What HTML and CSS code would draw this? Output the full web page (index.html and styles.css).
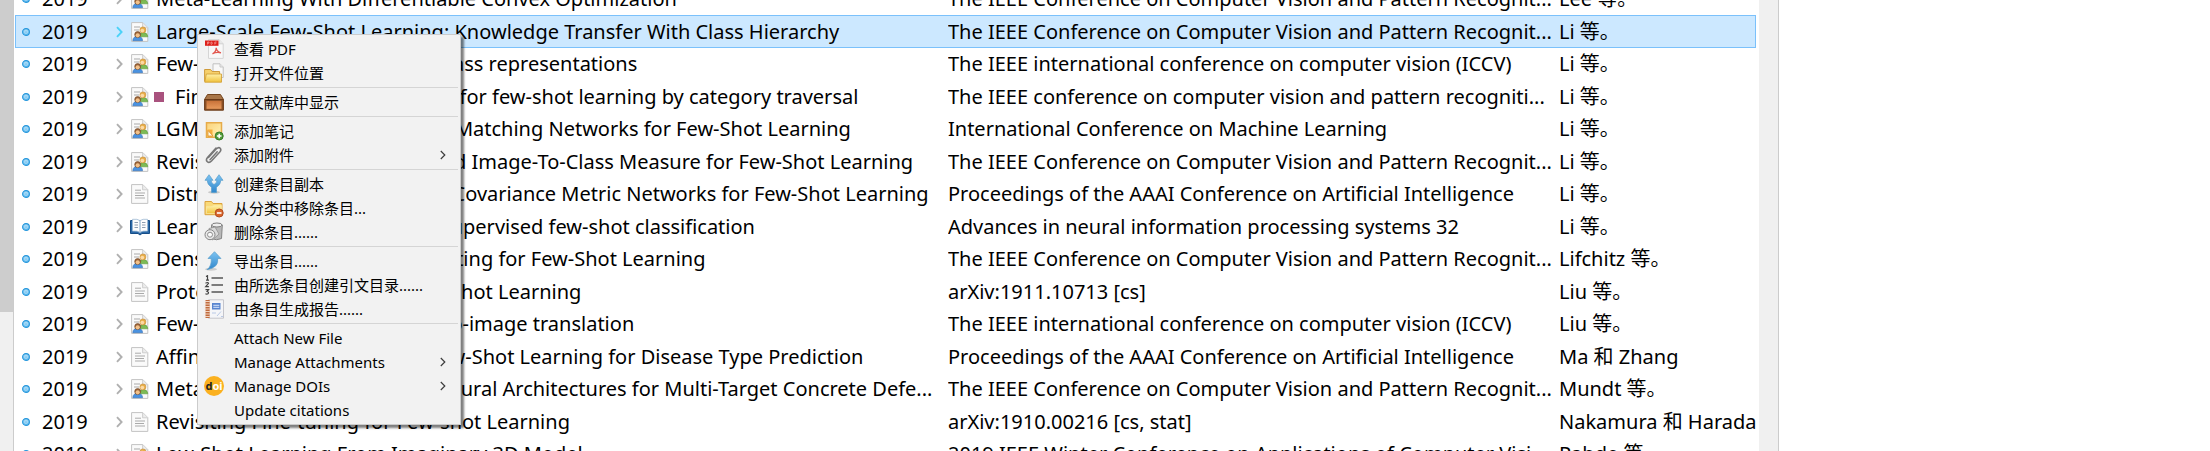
FILE: index.html
```
<!DOCTYPE html>
<html lang="zh-CN">
<head>
<meta charset="utf-8">
<title>Zotero</title>
<link rel="stylesheet" href="styles.css">
</head>
<body>
<svg class="sprites" aria-hidden="true">
  <defs>
    <linearGradient id="g-dot" x1="0" y1="0" x2="0" y2="1"><stop offset="0" stop-color="#a5d8f5"/><stop offset="1" stop-color="#5db9ee"/></linearGradient>
    <linearGradient id="g-blue" x1="0" y1="0" x2="0" y2="1"><stop offset="0" stop-color="#7cc3f2"/><stop offset="1" stop-color="#2f86cb"/></linearGradient>
    <linearGradient id="g-box" x1="0" y1="0" x2="0" y2="1"><stop offset="0" stop-color="#c9733a"/><stop offset="1" stop-color="#e79a5c"/></linearGradient>
    <linearGradient id="g-folder" x1="0" y1="0" x2="0" y2="1"><stop offset="0" stop-color="#fff0a8"/><stop offset="1" stop-color="#f0c23c"/></linearGradient>
    <linearGradient id="g-note" x1="0" y1="0" x2="1" y2="1"><stop offset="0" stop-color="#fbd27a"/><stop offset="1" stop-color="#fff3b8"/></linearGradient>
    <symbol id="dot" viewBox="0 0 8 8"><circle cx="4" cy="4" r="3.4" fill="url(#g-dot)" stroke="#2496dc" stroke-width="1.1"/><circle cx="4" cy="4" r="1.5" fill="none" stroke="#c6e8fa" stroke-width=".5"/></symbol>
    <symbol id="chev" viewBox="0 0 7 12"><path d="M1 1.2 5.6 6 1 10.8" fill="none" stroke="currentColor" stroke-width="1.9"/></symbol>
    <symbol id="sub" viewBox="0 0 6 10"><path d="M.8 1 4.8 5 .8 9" fill="none" stroke="#3c3c3c" stroke-width="1.2"/></symbol>
    <symbol id="page" viewBox="0 0 20 20"><path d="M1.6.6h11.2l5 5v13.8H1.6z" fill="#fafafa" stroke="#c3c3c3"/><path d="M12.6.8v5h5" fill="#ececec" stroke="#c9c9c9" stroke-width=".9"/><path d="M5 6.2h6M5 9h10M5 11.5h9M5 14h10" stroke="#aaa"/></symbol>
    <symbol id="conf" viewBox="0 0 20 20"><path d="M1.6.6h11.2l5 5v13.8H1.6z" fill="#fafafa" stroke="#c3c3c3"/><path d="M12.6.8v5h5" fill="#ececec" stroke="#c9c9c9" stroke-width=".9"/><path d="M4 5h6M4 8h5" stroke="#a9a9a9"/><path d="M9 14q1-3.4 4.500-3.400T17.700 14v.8H9z" fill="#7dbb55" stroke="#5c9a3a" stroke-width=".6"/><circle cx="12.900" cy="7.900" r="3" fill="#e9ae48" stroke="#c58a34" stroke-width=".6"/><circle cx="12.300" cy="8.600" r="1.900" fill="#fbd9a4"/><path d="M2.800 18.700q0-4.300 4.800-4.300t5 4.300z" fill="#4a92e0" stroke="#336fb5" stroke-width=".6"/><circle cx="7.700" cy="12.500" r="3" fill="#986238" stroke="#784a24" stroke-width=".6"/><circle cx="7.700" cy="13.300" r="2.100" fill="#f3c188"/></symbol>
    <symbol id="book" viewBox="0 0 20 20"><path d="M.5 3.500h19v13h-7.500L10 18l-2-1.500H.5z" fill="#2b69a8" stroke="#174d86"/><path d="M2.500 2.300q5-.6 7.500 1.300v11.800q-2.500-1.900-7.500-1.300zM17.500 2.300q-5-.6-7.500 1.300v11.800q2.500-1.900 7.500-1.300z" fill="#fdfdfd" stroke="#9db9d3" stroke-width=".8"/><path d="M4.500 5.500H8M4.500 8H8M4.500 10.500H8M12 5.500h3.500M12 8h3.500M12 10.500h3.500" stroke="#8e9db0"/></symbol>
    <symbol id="pdf" viewBox="0 0 20 20"><path d="M4.500.6h10.500l4.200 4.200v14.600H4.500z" fill="#f8f8f8" stroke="#d5d5d5"/><path d="M15 .6v4.200h4.200" fill="#e7e7e7" stroke="#ccc" stroke-width=".8"/><path d="M1 1.500h13.500v5.300H1z" fill="#dd1f1a"/><path d="M3.500 5.500v-2.500h1.500v1.200H3.800M7 3v2.300h.8q1.200-1.100 0-2.200zM10.800 5.500V3h1.800M10.800 4.200h1.500" fill="none" stroke="#f5a5a0" stroke-width=".7"/><path d="M8.500 14.800q3.700-1.700 3.700-6 .3 4 4.800 5-4.500-1.200-8.500 1z" fill="none" stroke="#e2574f" stroke-width="1.300"/></symbol>
    <symbol id="locate" viewBox="0 0 20 20"><path d="M9 .8h7l3.200 3.200v10.500H9z" fill="#f8f8f8" stroke="#c0c0c0"/><path d="M16 .8V4h3.200" fill="#e8e8e8" stroke="#c8c8c8"/><path d="M.6 18.500V6.500h6l1.500 2h7.500v3" fill="#f6d06c" stroke="#cf9b3b"/><path d="M.8 19.200 2.300 11h15.200v8.200z" fill="url(#g-folder)" stroke="#d4a33b" stroke-width=".9"/></symbol>
    <symbol id="library" viewBox="0 0 20 20"><path d="M3.500 2.500h13l3 5H.5z" fill="#a87649" stroke="#74451f"/><path d="M.6 7.500h18.800v10.700H.6z" fill="#8d5227" stroke="#6b3a18"/><path d="M2.500 9h15v7.800h-15z" fill="url(#g-box)"/></symbol>
    <symbol id="note" viewBox="0 0 20 20"><path d="M2.500 1.800h15v14.400h-15z" fill="url(#g-note)" stroke="#e6ab4a" stroke-width="1.500"/><path d="M3.500 8.500h5v7.300h-5z" fill="#f6ae3b"/><path d="m4 9.500 5 5.500H4z" fill="#fffbe0" stroke="#dd902d" stroke-width=".8"/><circle cx="15.200" cy="15" r="4" fill="#549c3b" stroke="#377c28"/><path d="M12.900 15h4.600M15.200 12.700v4.600" stroke="#fff" stroke-width="1.500"/></symbol>
    <symbol id="clip" viewBox="0 0 20 20"><path d="M4.500 12.500 12.200 4q2.500-2.300 4-.8t-.4 3.800L7.500 16q-2.300 2.300-4.200.7t.2-4.200L12 3M6 14.700l7.200-8" fill="none" stroke="#777" stroke-width="1.500" stroke-linecap="round"/></symbol>
    <symbol id="split" viewBox="0 0 20 20"><ellipse cx="10" cy="18.300" rx="6" ry="1.500" fill="#c9c9c9"/><path d="M5 .7 9 6.300H7q0 2.400 3 4.300 3-1.900 3-4.300h-2L15 .7l4 5.600h-2.200q0 4.300-4.300 7V18.500h-5v-5.200q-4.300-2.700-4.300-7H1z" fill="url(#g-blue)" stroke="#579ecb" stroke-width=".7"/></symbol>
    <symbol id="remove" viewBox="0 0 20 20"><path d="M1 16.700V3.500h6.500l1.500 2h9v11.200z" fill="#f9d978" stroke="#dca33d"/><path d="M2.500 8.500q5 1 7.500-1h7.500v8h-15z" fill="url(#g-folder)" stroke="#f9e9a8" stroke-width=".6"/><circle cx="15.200" cy="15" r="4" fill="#d9662c" stroke="#b34b1c"/><path d="M12.900 15h4.600" stroke="#fff" stroke-width="1.600"/></symbol>
    <symbol id="trash" viewBox="0 0 20 20"><path d="M7.500 3v13.500q5 2.500 10 0L18.300 3z" fill="#b9b9b9" stroke="#858585"/><ellipse cx="12.900" cy="3" rx="5.200" ry="2" fill="#ededed" stroke="#7c7c7c"/><path d="M5 6.500 11 5l4 7-6.500 6z" fill="#dadada" stroke="#8e8e8e" stroke-width=".8"/><circle cx="6" cy="12.700" r="5" fill="#e9e9e9" stroke="#858585"/><circle cx="6" cy="12.700" r="2.500" fill="#fafafa" stroke="#8e8e8e"/></symbol>
    <symbol id="export" viewBox="0 0 20 20"><ellipse cx="7" cy="18.300" rx="6" ry="1.500" fill="#cdcdcd"/><path d="M10.500.7 17 7.500h-3.300q1.300 9-10.700 11.200 5-4 4.200-11.200H4z" fill="url(#g-blue)" stroke="#579ecb" stroke-width=".7"/></symbol>
    <symbol id="biblio" viewBox="0 0 20 20"><path d="M7.500 3H19M7.500 10H19M7.500 17H19" stroke="#555" stroke-width="1.300"/><path d="M2 1.500 3.500.7v4.500M2 5.200h3M1.500 8.200q2.500-1.500 3 .2L1.700 11.600h3.200M1.500 14.700h3L3 16.500q2.300.5 1 2.200-1.200.7-2.600 0" fill="none" stroke="#444" stroke-width="1.200"/></symbol>
    <symbol id="report" viewBox="0 0 20 20"><path d="M4.500.8h15v18.400h-15z" fill="#f4f5f8" stroke="#c5c5cb"/><path d="M1.500 1h4.200v18H1.500z" fill="#c06b3e"/><path d="M.8 2.500h5M.8 5h5M.8 7.500h5M.8 10h5M.8 12.500h5M.8 15h5M.8 17.500h5" stroke="#f7dfce" stroke-width=".9"/><path d="M8 4h8.500v6.500H8z" fill="#5885d0"/><path d="M9.300 6.300h6M9.300 8.300h6" stroke="#d9e5fb"/><path d="M8 14h4M13 17l4-4.500M17 17.500h2" stroke="#b9c9e6"/></symbol>
    <symbol id="doi" viewBox="0 0 20 20"><circle cx="10" cy="10" r="10" fill="#fbb120"/><text x="10" y="14" text-anchor="middle" class="doi-text">d<tspan fill="#fff">oi</tspan></text></symbol>
  </defs>
</svg>
<main class="app">
  <div class="gutter"><div class="thumb"></div></div>
  <section class="list">
    <table class="items">
      <colgroup><col class="c-dot"><col class="c-year"><col class="c-title"><col class="c-pub"><col class="c-creator"></colgroup>
      <tbody>
        <tr><td><svg class="dot"><use href="#dot"/></svg></td><td>2019</td><td><div class="cell"><svg class="chev"><use href="#chev"/></svg><svg class="kind"><use href="#conf"/></svg><span>Meta-Learning With Differentiable Convex Optimization</span></div></td><td>The IEEE Conference on Computer Vision and Pattern Recognit...</td><td>Lee 等。</td></tr>
        <tr class="selected"><td><svg class="dot"><use href="#dot"/></svg></td><td>2019</td><td><div class="cell"><svg class="chev"><use href="#chev"/></svg><svg class="kind"><use href="#conf"/></svg><span>Large-Scale Few-Shot Learning: Knowledge Transfer With Class Hierarchy</span></div></td><td>The IEEE Conference on Computer Vision and Pattern Recognit...</td><td>Li 等。</td></tr>
        <tr><td><svg class="dot"><use href="#dot"/></svg></td><td>2019</td><td><div class="cell"><svg class="chev"><use href="#chev"/></svg><svg class="kind"><use href="#conf"/></svg><span>Few-shot learning with global class representations</span></div></td><td>The IEEE international conference on computer vision (ICCV)</td><td>Li 等。</td></tr>
        <tr><td><svg class="dot"><use href="#dot"/></svg></td><td>2019</td><td><div class="cell"><svg class="chev"><use href="#chev"/></svg><svg class="kind"><use href="#conf"/></svg><i class="tag"></i><span>Finding task-relevant features for few-shot learning by category traversal</span></div></td><td>The IEEE conference on computer vision and pattern recogniti...</td><td>Li 等。</td></tr>
        <tr><td><svg class="dot"><use href="#dot"/></svg></td><td>2019</td><td><div class="cell"><svg class="chev"><use href="#chev"/></svg><svg class="kind"><use href="#conf"/></svg><span>LGM-Net: Learning to Generate Matching Networks for Few-Shot Learning</span></div></td><td>International Conference on Machine Learning</td><td>Li 等。</td></tr>
        <tr><td><svg class="dot"><use href="#dot"/></svg></td><td>2019</td><td><div class="cell"><svg class="chev"><use href="#chev"/></svg><svg class="kind"><use href="#conf"/></svg><span>Revisiting Local Descriptor Based Image-To-Class Measure for Few-Shot Learning</span></div></td><td>The IEEE Conference on Computer Vision and Pattern Recognit...</td><td>Li 等。</td></tr>
        <tr><td><svg class="dot"><use href="#dot"/></svg></td><td>2019</td><td><div class="cell"><svg class="chev"><use href="#chev"/></svg><svg class="kind"><use href="#page"/></svg><span>Distribution Consistency Based Covariance Metric Networks for Few-Shot Learning</span></div></td><td>Proceedings of the AAAI Conference on Artificial Intelligence</td><td>Li 等。</td></tr>
        <tr><td><svg class="dot"><use href="#dot"/></svg></td><td>2019</td><td><div class="cell"><svg class="chev"><use href="#chev"/></svg><svg class="kind"><use href="#book"/></svg><span>Learning to self-train for semi-supervised few-shot classification</span></div></td><td>Advances in neural information processing systems 32</td><td>Li 等。</td></tr>
        <tr><td><svg class="dot"><use href="#dot"/></svg></td><td>2019</td><td><div class="cell"><svg class="chev"><use href="#chev"/></svg><svg class="kind"><use href="#conf"/></svg><span>Dense Classification and Implanting for Few-Shot Learning</span></div></td><td>The IEEE Conference on Computer Vision and Pattern Recognit...</td><td>Lifchitz 等。</td></tr>
        <tr><td><svg class="dot"><use href="#dot"/></svg></td><td>2019</td><td><div class="cell"><svg class="chev"><use href="#chev"/></svg><svg class="kind"><use href="#page"/></svg><span>Prototype Rectification for Few-Shot Learning</span></div></td><td>arXiv:1911.10713 [cs]</td><td>Liu 等。</td></tr>
        <tr><td><svg class="dot"><use href="#dot"/></svg></td><td>2019</td><td><div class="cell"><svg class="chev"><use href="#chev"/></svg><svg class="kind"><use href="#conf"/></svg><span>Few-shot unsupervised image-to-image translation</span></div></td><td>The IEEE international conference on computer vision (ICCV)</td><td>Liu 等。</td></tr>
        <tr><td><svg class="dot"><use href="#dot"/></svg></td><td>2019</td><td><div class="cell"><svg class="chev"><use href="#chev"/></svg><svg class="kind"><use href="#page"/></svg><span>AffinityNet: Semi-Supervised Few-Shot Learning for Disease Type Prediction</span></div></td><td>Proceedings of the AAAI Conference on Artificial Intelligence</td><td>Ma 和 Zhang</td></tr>
        <tr><td><svg class="dot"><use href="#dot"/></svg></td><td>2019</td><td><div class="cell"><svg class="chev"><use href="#chev"/></svg><svg class="kind"><use href="#conf"/></svg><span>Meta-Learning Convolutional Neural Architectures for Multi-Target Concrete Defe...</span></div></td><td>The IEEE Conference on Computer Vision and Pattern Recognit...</td><td>Mundt 等。</td></tr>
        <tr><td><svg class="dot"><use href="#dot"/></svg></td><td>2019</td><td><div class="cell"><svg class="chev"><use href="#chev"/></svg><svg class="kind"><use href="#page"/></svg><span>Revisiting Fine-tuning for Few-shot Learning</span></div></td><td>arXiv:1910.00216 [cs, stat]</td><td>Nakamura 和 Harada</td></tr>
        <tr><td><svg class="dot"><use href="#dot"/></svg></td><td>2019</td><td><div class="cell"><svg class="chev"><use href="#chev"/></svg><svg class="kind"><use href="#conf"/></svg><span>Low-Shot Learning From Imaginary 3D Model</span></div></td><td>2019 IEEE Winter Conference on Applications of Computer Visi...</td><td>Pahde 等。</td></tr>
      </tbody>
    </table>
  </section>
  <div class="splitter"></div>
  <aside class="details"></aside>
</main>
<div class="menu" role="menu">
  <button role="menuitem"><svg><use href="#pdf"/></svg><span>查看 PDF</span></button>
  <button role="menuitem"><svg><use href="#locate"/></svg><span>打开文件位置</span></button>
  <hr>
  <button role="menuitem"><svg><use href="#library"/></svg><span>在文献库中显示</span></button>
  <hr>
  <button role="menuitem"><svg><use href="#note"/></svg><span>添加笔记</span></button>
  <button role="menuitem"><svg><use href="#clip"/></svg><span>添加附件</span><svg class="sub"><use href="#sub"/></svg></button>
  <hr>
  <button role="menuitem"><svg><use href="#split"/></svg><span>创建条目副本</span></button>
  <button role="menuitem"><svg><use href="#remove"/></svg><span>从分类中移除条目...</span></button>
  <button role="menuitem"><svg><use href="#trash"/></svg><span>删除条目......</span></button>
  <hr>
  <button role="menuitem"><svg><use href="#export"/></svg><span>导出条目......</span></button>
  <button role="menuitem"><svg><use href="#biblio"/></svg><span>由所选条目创建引文目录......</span></button>
  <button role="menuitem"><svg><use href="#report"/></svg><span>由条目生成报告......</span></button>
  <hr>
  <button role="menuitem"><svg></svg><span>Attach New File</span></button>
  <button role="menuitem"><svg></svg><span>Manage Attachments</span><svg class="sub"><use href="#sub"/></svg></button>
  <button role="menuitem"><svg><use href="#doi"/></svg><span>Manage DOIs</span><svg class="sub"><use href="#sub"/></svg></button>
  <button role="menuitem"><svg></svg><span>Update citations</span></button>
</div>
</body>
</html>
```

FILE: styles.css
```
* { box-sizing: border-box; }
body { margin: 0; overflow: hidden; background: #fff; color: #000; font-family: "Noto Sans", "Noto Sans CJK SC", sans-serif; font-size: 20px; }
.sprites { position: absolute; width: 0; height: 0; }
.app { display: flex; height: 100vh; overflow: hidden; }

/* scrollbar of the collections pane */
.gutter { flex: none; width: 14px; background: #f0f0f0; border-right: 1px solid #ccc; }
.thumb { height: 312px; background: #cdcdcd; }

.list { flex: 1; min-width: 0; padding: 0 3px 0 1px; overflow: hidden; }
.items { width: 100%; margin-top: -17px; table-layout: fixed; border-collapse: collapse; }
.items tr { height: 32px; }
.items tr:nth-child(even) { height: 33px; }
.items td { padding: 0; line-height: 30px; white-space: nowrap; overflow: hidden; }
.c-dot { width: 27px; }
.c-year { width: 73px; }
.c-pub { width: 611px; }
.c-creator { width: 197px; }
.selected { background: #cce8ff; outline: 1px solid #7bc1fb; outline-offset: -1px; }
.dot { display: block; width: 8px; height: 8px; margin-left: 7px; }
.cell { display: flex; align-items: center; }
.cell svg, .tag { flex: none; }
.chev { width: 7px; height: 12px; margin-left: 1px; color: #b0b0b0; }
.selected .chev { color: #4bd2f8; }
.kind { width: 20px; height: 20px; margin: 0 6px 0 7px; }
.tag { width: 10px; height: 10px; margin: 0 11px 0 -2px; background: #a9527e; }

.splitter { flex: none; width: 20px; background: #f0f0f0; border-right: 1px solid #ccc; }
.details { flex: none; width: 431px; }

.menu { position: absolute; left: 197px; top: 34px; width: 264px; padding: 2px; background: #f2f2f2; border: 1px solid #ccc; box-shadow: 3px 3px 2px rgba(0, 0, 0, .5); }
.menu button { display: flex; align-items: center; gap: 10px; width: 100%; height: 24px; padding: 0 12px 0 4px; border: 0; background: none; color: #000; font: inherit; font-size: 15px; line-height: 24px; text-align: left; white-space: nowrap; }
.menu button svg { flex: none; width: 20px; height: 20px; }
.menu span { flex: 1; }
.menu button .sub { width: 6px; height: 10px; }
.menu hr { height: 5px; margin: 0 0 0 30px; border: 0; background: linear-gradient(#d5d5d5, #d5d5d5) 0 2px / 100% 1px no-repeat; }
.doi-text { font-family: "Noto Sans", sans-serif; font-size: 11px; font-weight: 700; fill: #222; }
```
